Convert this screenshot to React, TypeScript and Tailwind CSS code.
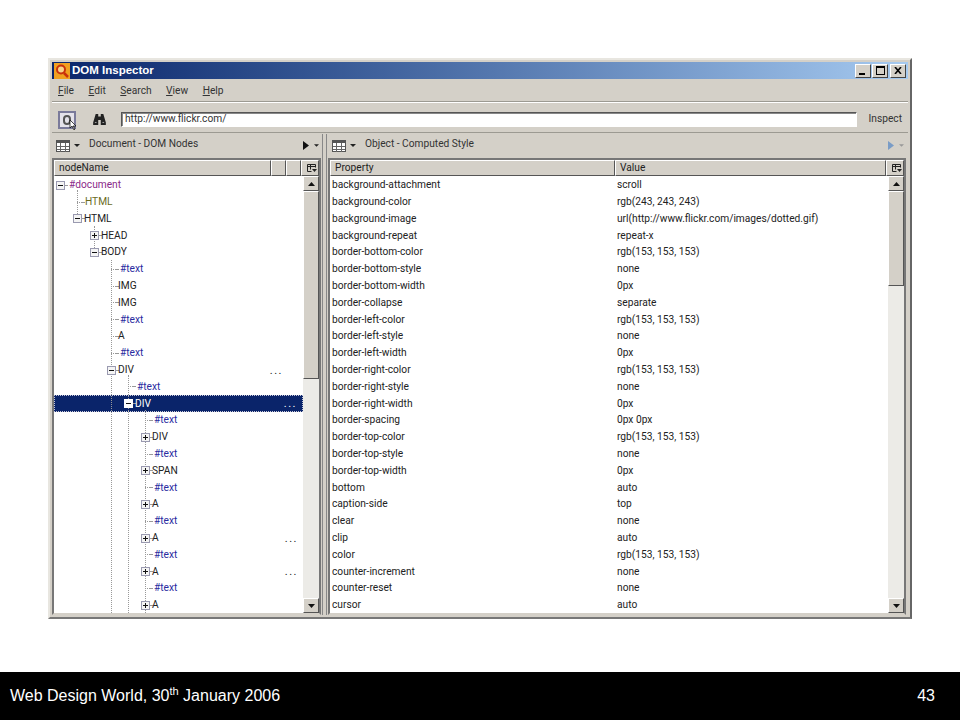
const tahoma = "font-['Roboto','Noto_Sans',sans-serif]";

type TreeNode = { label: string; depth: number; twisty?: 'plus' | 'minus'; kind?: 'text' | 'doc' | 'olive'; dots?: 'near' | 'far'; selected?: boolean };

const nodes: TreeNode[] = [
  { label: '#document', depth: 0, twisty: 'minus', kind: 'doc' },
  { label: 'HTML', depth: 1, kind: 'olive' },
  { label: 'HTML', depth: 1, twisty: 'minus' },
  { label: 'HEAD', depth: 2, twisty: 'plus' },
  { label: 'BODY', depth: 2, twisty: 'minus' },
  { label: '#text', depth: 3, kind: 'text' },
  { label: 'IMG', depth: 3 },
  { label: 'IMG', depth: 3 },
  { label: '#text', depth: 3, kind: 'text' },
  { label: 'A', depth: 3 },
  { label: '#text', depth: 3, kind: 'text' },
  { label: 'DIV', depth: 3, twisty: 'minus', dots: 'near' },
  { label: '#text', depth: 4, kind: 'text' },
  { label: 'DIV', depth: 4, twisty: 'minus', dots: 'far', selected: true },
  { label: '#text', depth: 5, kind: 'text' },
  { label: 'DIV', depth: 5, twisty: 'plus' },
  { label: '#text', depth: 5, kind: 'text' },
  { label: 'SPAN', depth: 5, twisty: 'plus' },
  { label: '#text', depth: 5, kind: 'text' },
  { label: 'A', depth: 5, twisty: 'plus' },
  { label: '#text', depth: 5, kind: 'text' },
  { label: 'A', depth: 5, twisty: 'plus', dots: 'far' },
  { label: '#text', depth: 5, kind: 'text' },
  { label: 'A', depth: 5, twisty: 'plus', dots: 'far' },
  { label: '#text', depth: 5, kind: 'text' },
  { label: 'A', depth: 5, twisty: 'plus' },
];

const styles: [string, string][] = [
  ['background-attachment', 'scroll'],
  ['background-color', 'rgb(243, 243, 243)'],
  ['background-image', 'url(http://www.flickr.com/images/dotted.gif)'],
  ['background-repeat', 'repeat-x'],
  ['border-bottom-color', 'rgb(153, 153, 153)'],
  ['border-bottom-style', 'none'],
  ['border-bottom-width', '0px'],
  ['border-collapse', 'separate'],
  ['border-left-color', 'rgb(153, 153, 153)'],
  ['border-left-style', 'none'],
  ['border-left-width', '0px'],
  ['border-right-color', 'rgb(153, 153, 153)'],
  ['border-right-style', 'none'],
  ['border-right-width', '0px'],
  ['border-spacing', '0px 0px'],
  ['border-top-color', 'rgb(153, 153, 153)'],
  ['border-top-style', 'none'],
  ['border-top-width', '0px'],
  ['bottom', 'auto'],
  ['caption-side', 'top'],
  ['clear', 'none'],
  ['clip', 'auto'],
  ['color', 'rgb(153, 153, 153)'],
  ['counter-increment', 'none'],
  ['counter-reset', 'none'],
  ['cursor', 'auto'],
];

function TableIcon() {
  return (
    <svg width="16" height="14" viewBox="0 0 16 14">
      <rect x="1.5" y="1.5" width="13" height="11" fill="#fff" stroke="#555" />
      <path d="M1.5 3h13" stroke="#555" strokeWidth="2" />
      <path d="M5.5 4v9M10.5 4v9M2 7.5h12M2 10.5h12" stroke="#666" />
    </svg>
  );
}

function ColPicker() {
  return (
    <svg width="10" height="9" viewBox="0 0 10 9">
      <path d="M0.5 0.5h8M0.5 0.5v7h4M8.5 0.5v3M3.5 .5v5" stroke="#222" fill="none" />
      <path d="M0 2.5h9" stroke="#222" />
      <path d="M5 5h5L7.5 8z" fill="#222" />
    </svg>
  );
}

function Arrow({ dir }: { dir: 'up' | 'down' }) {
  return (
    <svg width="7" height="4" viewBox="0 0 7 4">
      <path d={dir === 'up' ? 'M3.5 0L7 4H0z' : 'M0 0h7L3.5 4z'} fill="#111" />
    </svg>
  );
}

function Twisty({ type, selected }: { type: 'plus' | 'minus'; selected?: boolean }) {
  return (
    <span className={`relative z-10 flex h-[9px] w-[9px] shrink-0 items-center justify-center border ${selected ? 'border-white bg-white' : 'border-[#9a9ab0] bg-[#f4f4f4]'}`}>
      <span className="h-px w-[5px] bg-[#111]" />
      {type === 'plus' && <span className="absolute h-[5px] w-px bg-[#111]" />}
    </span>
  );
}

const raised = 'border border-b-[#555] border-l-white border-r-[#555] border-t-white bg-[#d4d0c8]';

function Scrollbar({ thumb }: { thumb: string }) {
  return (
    <div className="flex h-full w-4 shrink-0 flex-col bg-[#ecebe7]">
      <div className={`flex h-[15px] shrink-0 items-center justify-center ${raised}`}>
        <Arrow dir="up" />
      </div>
      <div className={`${raised} ${thumb}`} />
      <div className="flex-1" />
      <div className={`flex h-[15px] shrink-0 items-center justify-center ${raised}`}>
        <Arrow dir="down" />
      </div>
    </div>
  );
}

function HeaderCell({ label, className, children }: { label?: string; className: string; children?: React.ReactNode }) {
  return (
    <div className={`flex h-4 shrink-0 items-center pl-1 pt-px text-[#222] ${raised} ${className}`}>
      {label}
      {children}
    </div>
  );
}

function TreeRow({ node }: { node: TreeNode }) {
  const color = node.selected
    ? 'text-white'
    : node.kind === 'text'
      ? 'ml-[2px] text-[#2b2ba0]'
      : node.kind === 'doc'
        ? 'ml-[2px] text-[#8a2a8a]'
        : node.kind === 'olive'
          ? 'ml-[1px] text-[#6b6b1e]'
          : 'text-[#222]';
  // each depth steps in 17px, same as the source tree
  const left = 2 + node.depth * 17;
  return (
    <div className={`relative flex h-[16.8px] items-center ${node.selected ? 'border border-dotted border-[#c8c8d8] bg-[#0a246a]' : ''}`}>
      <div className={`flex items-center ${node.selected ? '-ml-px' : ''}`} style={{ paddingLeft: left }}>
        {node.twisty ? (
          <Twisty type={node.twisty} selected={node.selected} />
        ) : (
          <span className="ml-[4px] w-[5px] shrink-0 border-t border-dotted border-[#999]" />
        )}
        <span className="w-[2px] shrink-0 border-t border-dotted border-[#999]" />
        <span className={color}>{node.label}</span>
      </div>
      {node.dots && (
        <span className={`ml-auto text-[11px] tracking-[1.5px] ${node.dots === 'near' ? 'mr-[20px]' : 'mr-[5px]'} ${node.selected ? 'text-white' : 'text-[#222]'}`}>...</span>
      )}
    </div>
  );
}

function PaneHeader({ title, disabled }: { title: string; disabled?: boolean }) {
  return (
    <div className="flex h-[25px] shrink-0 items-center pl-[3px] pr-[2px]">
      <TableIcon />
      <svg className="ml-[3px]" width="6" height="3" viewBox="0 0 6 3"><path d="M0 0h6L3 3z" fill="#222" /></svg>
      <span className="-mt-[3px] ml-[9px] text-[#333]">{title}</span>
      <svg className="ml-auto" width="6" height="9" viewBox="0 0 6 9"><path d="M0 0l6 4.5L0 9z" fill={disabled ? '#7a9cc6' : '#111'} /></svg>
      <svg className="ml-[5px]" width="5" height="3" viewBox="0 0 6 3"><path d="M0 0h6L3 3z" fill={disabled ? '#999' : '#222'} /></svg>
    </div>
  );
}

export default function App() {
  return (
    <div className={`flex h-[720px] w-[960px] flex-col overflow-hidden bg-white text-[10.2px] leading-none ${tahoma}`}>
      <div className="flex-1 pl-12 pt-[58px]">
        <div className="flex h-[561px] w-[864px] flex-col border-2 border-b-[#777] border-l-[#e8e6e0] border-r-[#666] border-t-[#e8e6e0] bg-[#d4d0c8] p-[2px]">
          {/* title bar */}
          <div className="flex h-[17px] shrink-0 items-center bg-gradient-to-r from-[#0a246a] to-[#a6caf0] px-[2px]">
            <svg width="16" height="16" viewBox="0 0 16 16">
              <rect width="16" height="16" fill="#f0a020" />
              <circle cx="7" cy="6.5" r="4" fill="#f7d38a" stroke="#c8300c" strokeWidth="2" />
              <path d="M10 10l4 4" stroke="#c8300c" strokeWidth="2.5" />
            </svg>
            <span className="ml-[2px] font-['Liberation_Sans',sans-serif] text-[11.5px] font-bold text-white">DOM Inspector</span>
            <div className="ml-auto flex gap-[1px]">
              <div className="flex h-[14px] w-4 items-end border border-b-[#444] border-l-white border-r-[#444] border-t-white bg-[#d4d0c8] pb-[2px] pl-[3px]"><span className="h-[2px] w-[6px] bg-black" /></div>
              <div className="flex h-[14px] w-4 items-center justify-center border border-b-[#444] border-l-white border-r-[#444] border-t-white bg-[#d4d0c8]"><span className="h-[9px] w-[9px] border border-t-2 border-black" /></div>
              <div className="ml-[1px] flex h-[14px] w-4 items-center justify-center border border-b-[#444] border-l-white border-r-[#444] border-t-white bg-[#d4d0c8]">
                <svg width="8" height="7" viewBox="0 0 8 7"><path d="M1 0l6 7M7 0L1 7" stroke="#000" strokeWidth="1.6" /></svg>
              </div>
            </div>
          </div>
          {/* menu */}
          <div className="flex h-[23px] shrink-0 items-center gap-[14.5px] border-b border-b-[#9c9a92] pl-[6px] pt-[3px] text-[#333]">
            <span><u>F</u>ile</span>
            <span><u>E</u>dit</span>
            <span><u>S</u>earch</span>
            <span><u>V</u>iew</span>
            <span><u>H</u>elp</span>
          </div>
          {/* toolbar */}
          <div className="flex h-[31px] shrink-0 items-center border-b border-t border-b-[#9c9a92] border-t-white pl-[6px] pr-[6px] pt-[4px]">
            <div className="relative flex h-[18px] w-[18px] items-center justify-center border-2 border-[#7a7a9a] bg-[#e4e2ea]">
              <span className="h-[10px] w-[8px] rounded-sm border-2 border-[#555]" />
              <svg className="absolute -bottom-[3px] -right-[3px]" width="8" height="10" viewBox="0 0 8 10"><path d="M1 0v8l2-2 2 4 1-1-2-3h3z" fill="#fff" stroke="#000" strokeWidth="0.7" /></svg>
            </div>
            <svg className="ml-[16px]" width="15" height="11" viewBox="0 0 15 13">
              <path d="M3 0h3v3h3V0h3l3 10v3H9V7H6v6H0v-3z" fill="#222" />
              <path d="M2 10h2M11 10h2" stroke="#bbb" />
            </svg>
            <div className="ml-[14px] flex h-[15px] w-[736px] items-center border border-b-white border-l-[#555] border-r-white border-t-[#555] bg-white pl-[3px] text-[#333] shadow-[inset_1px_1px_0_#888]">
              http://www.flickr.com/
            </div>
            <span className="ml-auto text-[#333]">Inspect</span>
          </div>
          {/* panes */}
          <div className="flex min-h-0 flex-1">
            <section className="flex w-[269px] shrink-0 flex-col">
              <PaneHeader title="Document - DOM Nodes" />
              <div className="flex min-h-0 flex-1 flex-col border-2 border-[#777] border-b-[#d4d0c8] bg-white">
                <div className="flex shrink-0">
                  <HeaderCell label="nodeName" className="flex-1" />
                  <HeaderCell className="w-[15px]" />
                  <HeaderCell className="w-[15px]" />
                  <HeaderCell className="w-[18px] justify-center pl-0"><ColPicker /></HeaderCell>
                </div>
                <div className="flex min-h-0 flex-1">
                  <div className="relative min-w-0 flex-1 overflow-hidden pt-px">
                    {nodes.map((n, i) => <TreeRow key={i} node={n} />)}
                    <span className="absolute left-[23px] top-[14px] h-[28px] border-l border-dotted border-[#999]" />
                    <span className="absolute left-[40px] top-[50px] h-[26px] border-l border-dotted border-[#999]" />
                    <span className="absolute bottom-0 left-[57px] top-[84px] border-l border-dotted border-[#999]" />
                    <span className="absolute bottom-0 left-[74px] top-[199px] border-l border-dotted border-[#999]" />
                    <span className="absolute bottom-0 left-[91px] top-[234px] border-l border-dotted border-[#999]" />
                  </div>
                  <Scrollbar thumb="h-[188px] shrink-0" />
                </div>
              </div>
            </section>
            <div className="mx-[1px] mt-[1px] w-[5px] shrink-0 border-x border-x-[#888] bg-[#d4d0c8]" />
            <section className="flex min-w-0 flex-1 flex-col pr-[2px]">
              <PaneHeader title="Object - Computed Style" disabled />
              <div className="flex min-h-0 flex-1 flex-col border-2 border-[#777] border-b-[#d4d0c8] bg-white">
                <div className="flex shrink-0">
                  <HeaderCell label="Property" className="w-[285px]" />
                  <HeaderCell label="Value" className="flex-1" />
                  <HeaderCell className="w-[18px] justify-center pl-0"><ColPicker /></HeaderCell>
                </div>
                <div className="flex min-h-0 flex-1">
                  <div className="min-w-0 flex-1 overflow-hidden pl-[2px] pt-px text-[#222]">
                    {styles.map(([k, v]) => (
                      <div key={k} className="flex h-[16.8px] items-center">
                        <span className="w-[285px] shrink-0">{k}</span>
                        <span>{v}</span>
                      </div>
                    ))}
                  </div>
                  <Scrollbar thumb="h-[95px] shrink-0" />
                </div>
              </div>
            </section>
          </div>
        </div>
      </div>
      <footer className="flex h-12 shrink-0 items-center justify-between bg-black pb-[1px] pl-[10px] pr-[25px] font-['Liberation_Sans',sans-serif] text-base text-white">
        <span>Web Design World, 30<sup className="text-[11px]">th</sup> January 2006</span>
        <span>43</span>
      </footer>
    </div>
  );
}
